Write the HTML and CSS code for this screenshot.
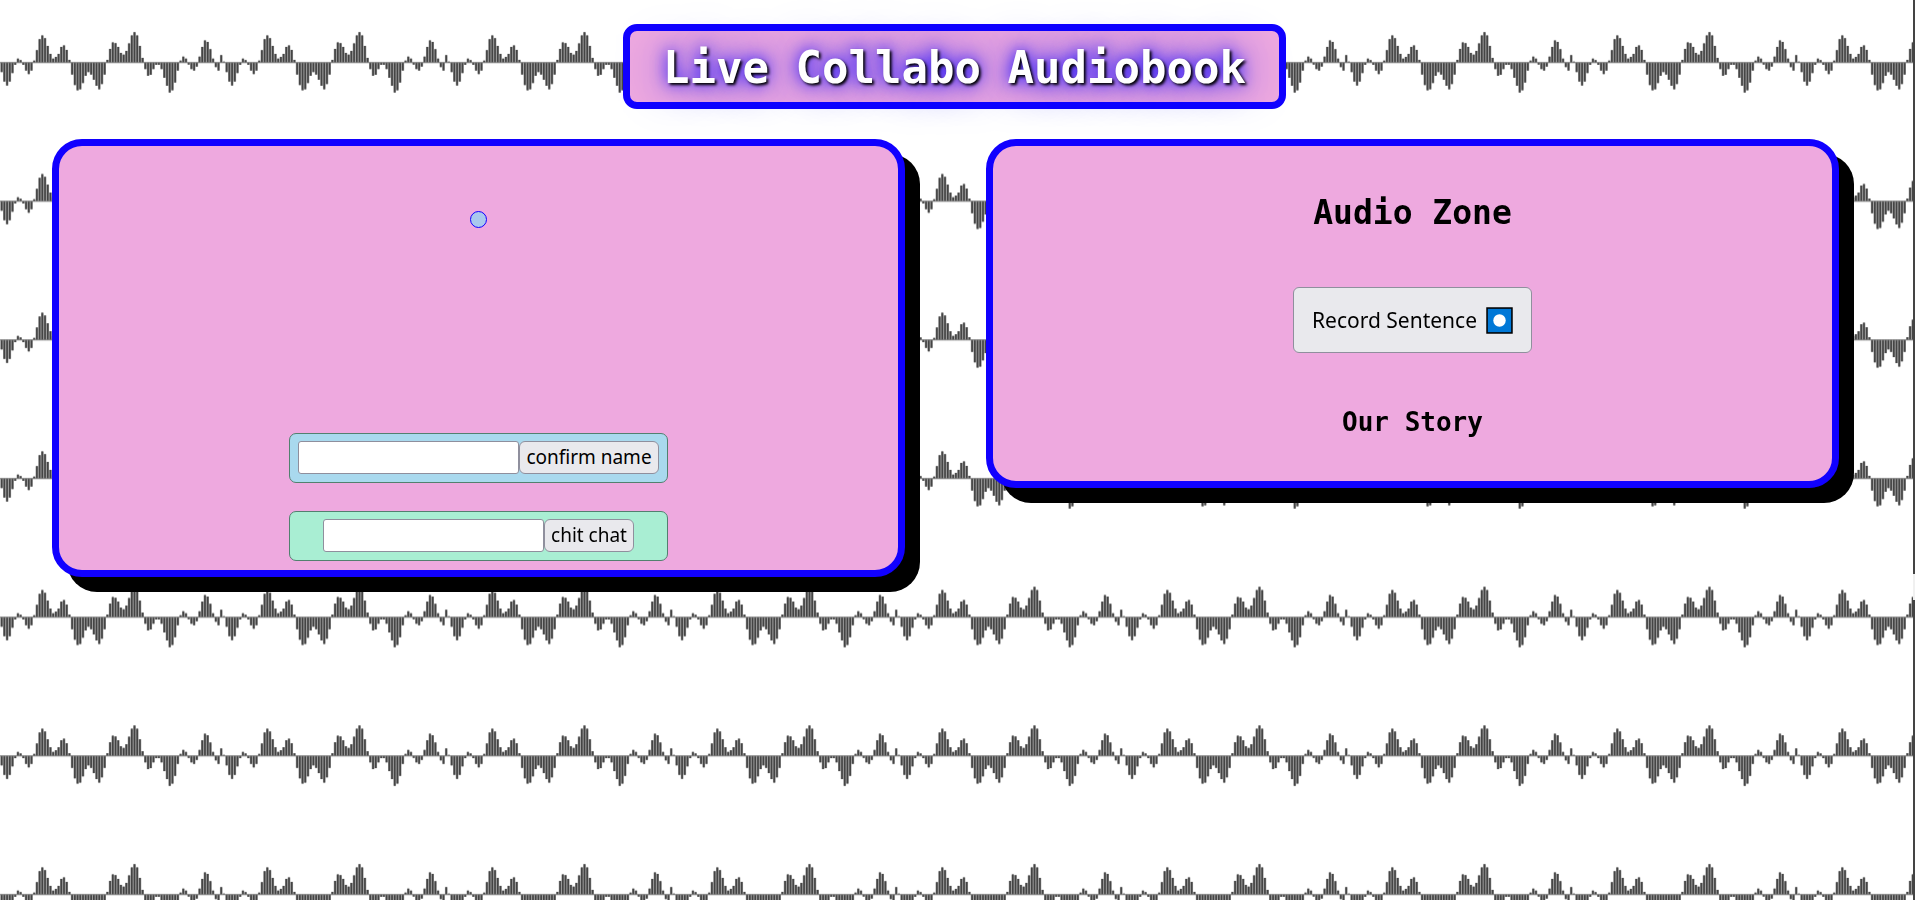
FILE: index.html
```
<!DOCTYPE html>
<html lang="en">
<head>
<meta charset="utf-8">
<title>Live Collabo Audiobook</title>
<link rel="stylesheet" href="styles.css">
</head>
<body>
<svg class="waves" aria-hidden="true">
  <defs>
    <pattern id="wave" width="675" height="416" patternUnits="userSpaceOnUse" patternTransform="scale(0.33333)">
      <path class="wave-fill" id="wave-fill"/>
      <path class="wave-bars" id="wave-bars"/>
      <path class="wave-axis" d="M0 187.500H675"/>
    </pattern>
  </defs>
  <rect width="100%" height="100%" fill="url(#wave)"/>
</svg>
<div class="edge" aria-hidden="true"><span class="edge-thumb"></span></div>
<header class="header"><h1 class="title">Live Collabo Audiobook</h1></header>
<main class="zones">
  <section class="card chat" aria-label="Chat">
    <div class="avatar"></div>
    <div class="forms">
      <form class="box name-box">
        <input class="field" type="text" aria-label="name"><button class="button" type="button">confirm name</button>
      </form>
      <form class="box chat-box">
        <input class="field" type="text" aria-label="message"><button class="button" type="button">chit chat</button>
      </form>
    </div>
  </section>
  <section class="card audio">
    <h2 class="audio-title">Audio Zone</h2>
    <button class="button record" type="button">Record Sentence
      <svg class="record-icon" viewBox="0 0 26 26" aria-hidden="true"><rect x="1" y="1" width="24" height="24" fill="#0078d7" stroke="#000" stroke-width="1.500"/><circle cx="13" cy="13" r="6" fill="#fff"/></svg>
    </button>
    <h3 class="story-title">Our Story</h3>
  </section>
</main>
<script src="waves.js"></script>
</body>
</html>
```
FILE: waves.js
```
// Amplitudes of one waveform period; positive bars rise above the axis.
const levels = [
  -29, -57, -69, -57, -32, -7, 12, 7, -7, -24, -35, -24, 6, 37, 70, 81, 73, 50, 26, 12, 17,
  26, 47, 51, 38, 8, -36, -68, -83, -80, -62, -40, -29, -36, -52, -70, -80, -65, -36, 8, 41,
  60, 58, 47, 29, 24, 35, 57, 81, 91, 81, 50, 14, -20, -40, -37, -20, -7, -7, -20, -46,
  -70, -90, -83, -60, -24, 6, 18, 12, -6, -20, -24, -12, 18, 47, 66, 62, 40, 12, -14, -24, 22, 3
];
const step = 675 / levels.length;
const path = levels.map((v, i) => `M${(5 + i * step).toFixed(1)} 187.5v${-v}`).join("");
document.getElementById("wave-fill").setAttribute("d", path);
document.getElementById("wave-bars").setAttribute("d", path);
```
FILE: styles.css
```
* { box-sizing: border-box; }
body {
  margin: 0;
  min-height: 100vh;
  background: #fff;
  color: #000;
  font-family: "Noto Sans", sans-serif;
}
.waves {
  position: fixed;
  inset: 0;
  z-index: -1;
  width: 100%;
  height: 100%;
}
.wave-fill { stroke: #989898; stroke-width: 8; }
.wave-bars { stroke: #444; stroke-width: 5; }
.wave-axis { stroke: #777; stroke-width: 3; }
.edge {
  position: fixed;
  top: 0;
  right: 0;
  bottom: 0;
  width: 2px;
  background: #444;
}
.edge-thumb {
  position: absolute;
  top: 574px;
  left: 0;
  width: 2px;
  height: 26px;
  background: #f0f0f0;
}
.header {
  display: flex;
  justify-content: center;
  padding: 24px 6px 30px 0;
}
.title {
  margin: 0;
  padding: 11px 33px 9px;
  border: 7px solid #10f;
  border-radius: 14px;
  background: #eea9df;
  color: #fff;
  font: bold 44px/51px "DejaVu Sans Mono", monospace;
  text-shadow: 2px 2px 3px #000, 0 0 48px #10f, 0 0 16px #10f;
}
.zones {
  display: grid;
  grid-template-columns: 1fr 1fr;
  align-items: start;
  gap: 81px;
  padding: 0 76px 40px 52px;
}
.card {
  display: flex;
  flex-direction: column;
  align-items: center;
  border: 7px solid #10f;
  border-radius: 30px;
  background: #eea9df;
  box-shadow: 15px 15px 0 #000;
}
.chat {
  gap: 205px;
  padding: 65px 20px 9px;
}
.avatar {
  width: 17px;
  height: 17px;
  border: 1px solid #10f;
  border-radius: 50%;
  background: #a9c9ee;
}
.forms {
  display: grid;
  gap: 28px;
}
.box {
  display: flex;
  justify-content: center;
  padding: 7px 8px 8px;
  border: 1px solid #52806f;
  border-radius: 7px;
}
.name-box { background: #a9d9ee; }
.chat-box { background: #a9eed3; }
.field {
  width: 221px;
  height: 33px;
  padding: 1px 4px;
  border: 1px solid #8f8f9d;
  border-radius: 3px;
  background: #fff;
  font: 19px "Noto Sans", sans-serif;
}
.button {
  height: 33px;
  padding: 0 6px;
  border: 1px solid #8f8f9d;
  border-radius: 6px;
  background: #e9e9ed;
  color: #000;
  font: 19px/31px "Noto Sans", sans-serif;
}
.audio { padding: 47px 20px 43px; }
.audio-title {
  margin: 0;
  font: bold 33px/40px "DejaVu Sans Mono", monospace;
}
.record {
  display: flex;
  align-items: center;
  gap: 9px;
  height: 66px;
  margin: 54px 0 53px;
  padding: 0 18px;
  font-size: 21px;
}
.record-icon {
  width: 27px;
  height: 27px;
}
.story-title {
  margin: 0;
  font: bold 26px/32px "DejaVu Sans Mono", monospace;
}
```
